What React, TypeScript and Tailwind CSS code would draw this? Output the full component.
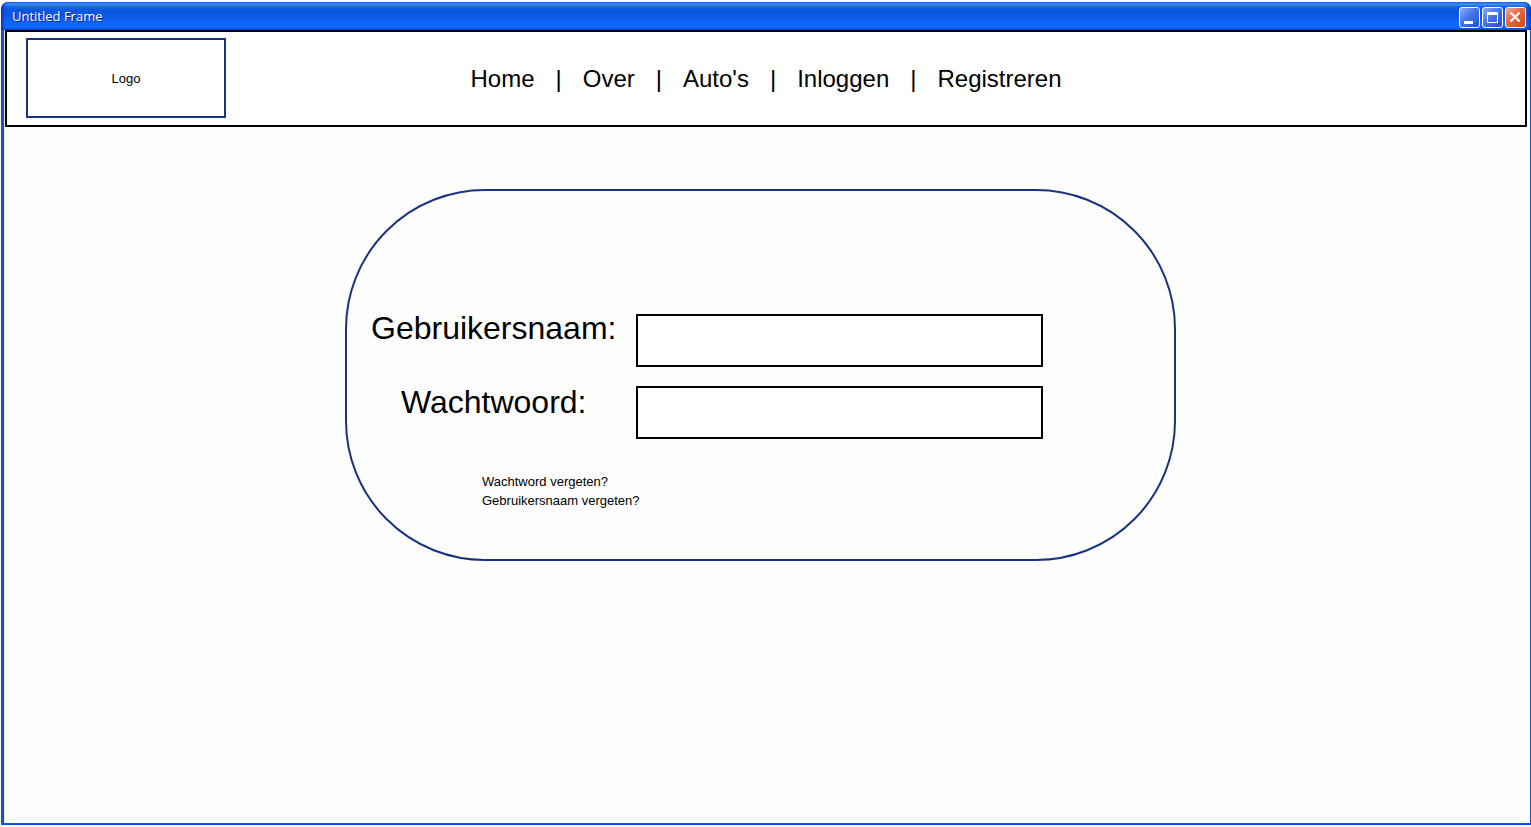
import React from "react";

const links = ["Home", "Over", "Auto's", "Inloggen", "Registreren"];

function WindowButton({
  label,
  tone,
  children,
}: {
  label: string;
  tone: string;
  children: React.ReactNode;
}) {
  return (
    <button
      type="button"
      aria-label={label}
      className={`flex h-[21px] w-[21px] items-center justify-center rounded-[3px] border border-white ${tone}`}
    >
      <svg width="19" height="19" viewBox="0 0 19 19" aria-hidden="true">
        {children}
      </svg>
    </button>
  );
}

function TitleBar() {
  return (
    <header className="flex h-7 items-center justify-between rounded-t-[7px] bg-[linear-gradient(to_bottom,#1c6be8_0px,#3c93ff_2px,#1763ea_5px,#0c55de_8px,#0b58e2_14px,#1068fb_21px,#0f68fb_25px,#0a54d8_28px)] pr-[5px] pl-[11px] shadow-[inset_3px_0_3px_-1px_#0638b4,inset_-3px_0_3px_-1px_#0638b4]">
      <h1 className="font-['Open_Sans',sans-serif] text-[13px] leading-5 font-medium text-white [text-shadow:1px_1px_0_#0a1e8c]">
        Untitled Frame
      </h1>
      <div className="flex gap-0.5 pt-0.5">
        <WindowButton label="Minimize" tone="bg-[linear-gradient(135deg,#8eadf6,#4674ea_45%,#1f50d4)]">
          <rect x="4" y="13" width="9" height="3" fill="#fff" />
        </WindowButton>
        <WindowButton label="Maximize" tone="bg-[linear-gradient(135deg,#8eadf6,#4674ea_45%,#1f50d4)]">
          <path d="M4 4h11v11H4zM5 7v7h9V7z" fill="#fff" fillRule="evenodd" />
        </WindowButton>
        <WindowButton label="Close" tone="bg-[linear-gradient(135deg,#f2a890,#e8663f_45%,#d9430f)]">
          <path d="M4.5 4.5l9 9M13.5 4.5l-9 9" stroke="#fff" strokeWidth="2.2" />
        </WindowButton>
      </div>
    </header>
  );
}

function SiteHeader() {
  return (
    <div className="grid grid-cols-[1fr_auto_1fr] items-center border-2 border-black bg-white px-[19px] pt-1.5 pb-[7px]">
      <div className="flex h-20 w-[200px] items-center justify-center border-2 border-[#1b3281] pt-0.5 text-[13px]">
        Logo
      </div>
      <nav className="flex gap-[21px] pt-0.5 text-2xl leading-8">
        {links.map((name, i) => (
          <React.Fragment key={name}>
            {i > 0 && <span>|</span>}
            <a href="#">{name}</a>
          </React.Fragment>
        ))}
      </nav>
    </div>
  );
}

function LoginPanel() {
  return (
    <form className="w-full max-w-[831px] rounded-[140px] border-2 border-[#1b3281] pt-[123px] pb-[49px] pl-6">
      <div className="flex gap-5">
        <div className="flex flex-col items-center gap-[46px] text-[32px] leading-7">
          <label htmlFor="username">Gebruikersnaam:</label>
          <label htmlFor="password">Wachtwoord:</label>
        </div>
        <div className="flex w-[407px] flex-col gap-[19px]">
          <input id="username" type="text" className="h-[53px] border-2 border-black bg-white px-3 text-2xl outline-none" />
          <input id="password" type="password" className="h-[53px] border-2 border-black bg-white px-3 text-2xl outline-none" />
        </div>
      </div>
      <div className="flex flex-col items-start pt-[33px] pl-[111px] text-[13px] leading-[19px]">
        <a href="#">Wachtword vergeten?</a>
        <a href="#">Gebruikersnaam vergeten?</a>
      </div>
    </form>
  );
}

export default function App() {
  return (
    <div className="flex min-h-screen flex-col bg-white pt-0.5 pb-0.5 pl-px font-['Liberation_Sans',Arial,sans-serif] text-black">
      <TitleBar />
      <div className="flex grow flex-col border-r border-b-2 border-l-[3px] border-[#0855dd] bg-[#fefefe]">
        <div className="flex grow flex-col border-l border-[#ece9d8] pr-[3px]">
          <SiteHeader />
          <main className="flex grow items-start justify-center pt-[62px] pr-[11px]">
            <LoginPanel />
          </main>
        </div>
      </div>
    </div>
  );
}
